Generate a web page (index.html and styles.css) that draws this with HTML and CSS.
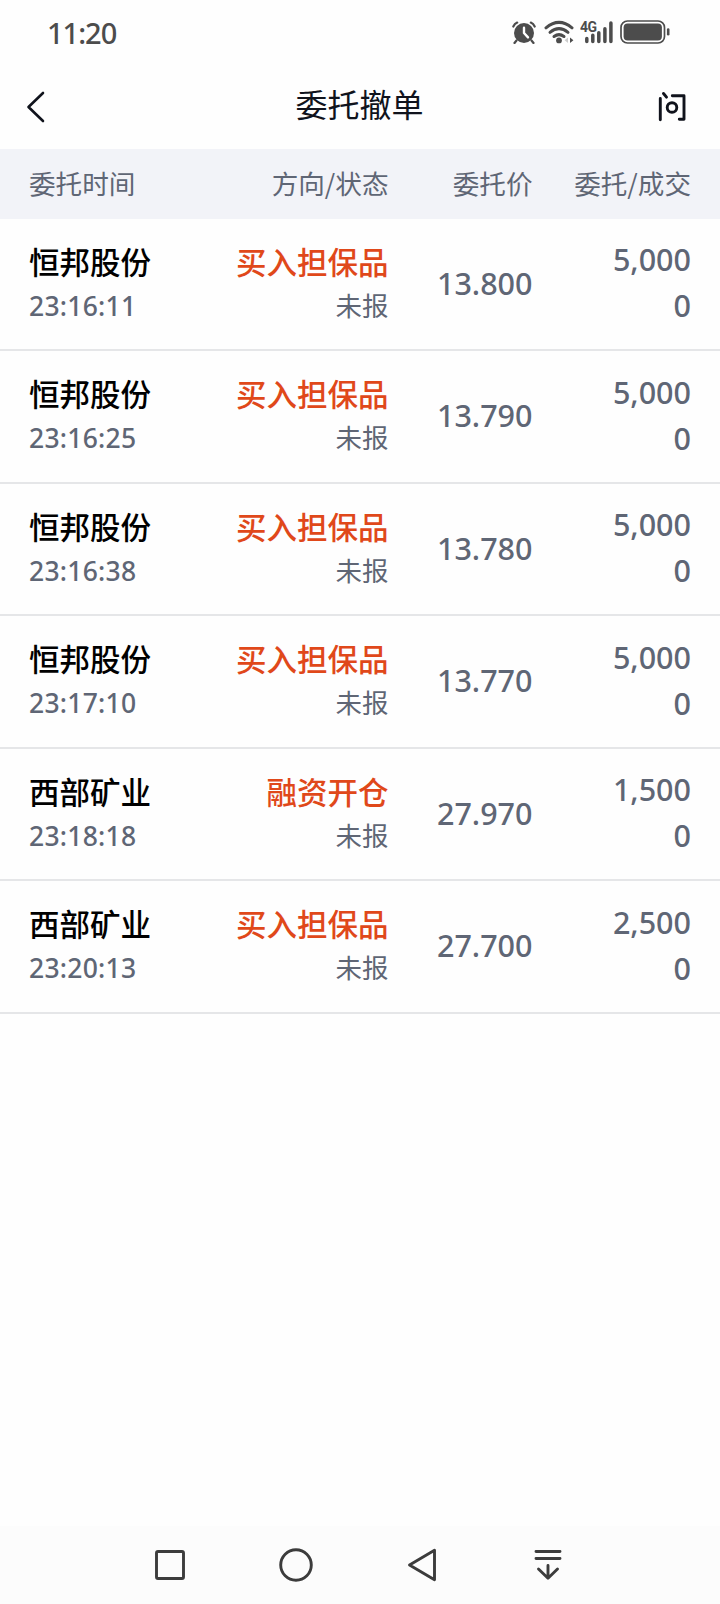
FILE: index.html
```html
<!DOCTYPE html>
<html lang="zh-CN">
<head>
    <meta charset="UTF-8">
    <meta name="viewport" content="width=device-width, initial-scale=1.0">
    <title>委托撤单</title>
    <link rel="stylesheet" href="styles.css">
</head>
<body>
    <div class="status-bar">
        <span class="clock">11:20</span>
        <div class="status-icons">
            <svg class="alarm" width="26" height="24" viewBox="0 0 26 24">
                <circle cx="13" cy="13" r="10" fill="#4c4c4c"/>
                <path d="M2.3 6.5 Q3.6 3.8 6.2 2.6M23.7 6.5 Q22.4 3.8 19.8 2.6M5.5 20.5 3.5 23M20.5 20.5 22.5 23" fill="none" stroke="#4c4c4c" stroke-width="2.2" stroke-linecap="round"/>
                <path d="M13 7.8V13L17 17.4" fill="none" stroke="#fff" stroke-width="2.4" stroke-linecap="round" stroke-linejoin="round"/>
            </svg>
            <svg class="wifi" width="30" height="24" viewBox="0 0 30 24">
                <g fill="none" stroke="#4c4c4c" stroke-width="3" stroke-linecap="round">
                    <path d="M2 7.8Q15-3 28 7.8"/>
                    <path d="M6 12.3Q15 5 24 12.3"/>
                    <path d="M10 16.5Q15 12.8 20 16.5"/>
                </g>
                <circle cx="15" cy="20.4" r="2.9" fill="#4c4c4c"/>
                <path d="M24 17.5V23L20.6 20.2Z" fill="#ccc"/>
                <path d="M26 17.5V23L29.4 20.2Z" fill="#4c4c4c"/>
            </svg>
            <svg class="signal" width="34" height="24" viewBox="0 0 34 24">
                <text x="0" y="11.7" class="net">4G</text>
                <path d="M6.8 18.5V21.5M12.8 15.2V21.5M18.8 12.8V21.5M24.9 8.7V21.5M30.9 3V21.5" stroke="#4c4c4c" stroke-width="3.5" stroke-linecap="round"/>
            </svg>
            <svg class="battery" width="50" height="24" viewBox="0 0 50 24">
                <rect x="1" y="1" width="43.5" height="22" rx="6.5" fill="none" stroke="#4c4c4c" stroke-width="1.7"/>
                <rect x="3.6" y="3.5" width="38.3" height="17" rx="4" fill="#4c4c4c"/>
                <path d="M48.2 9.5V14.3" stroke="#4c4c4c" stroke-width="2.6" stroke-linecap="round"/>
            </svg>
        </div>
    </div>

    <header class="title-bar">
        <svg width="28" height="32" viewBox="0 0 28 32">
            <path d="M17 2 2.5 16 17 30" fill="none" stroke="#10131c" stroke-width="2.6" stroke-linecap="round" stroke-linejoin="round"/>
        </svg>
        <h1>委托撤单</h1>
        <svg width="28" height="32" viewBox="0 0 28 32">
            <g fill="none" stroke="#10131c" stroke-width="2.9" stroke-linecap="round" stroke-linejoin="round">
                <path d="M2.3 7.5V28.8M5.5 2.5 8.5 6.2"/>
                <path d="M14.3 4.7H26V28.3H21.3"/>
                <circle cx="14" cy="16.5" r="4.8"/>
            </g>
        </svg>
    </header>

    <div class="row table-head">
        <span>委托时间</span>
        <span>方向/状态</span>
        <span>委托价</span>
        <span>委托/成交</span>
    </div>

    <main class="orders">
        <div class="row order">
            <div class="stock"><b>恒邦股份</b><span>23:16:11</span></div>
            <div class="side"><b>买入担保品</b><span>未报</span></div>
            <div class="price">13.800</div>
            <div class="qty"><span>5,000</span><span>0</span></div>
        </div>
        <div class="row order">
            <div class="stock"><b>恒邦股份</b><span>23:16:25</span></div>
            <div class="side"><b>买入担保品</b><span>未报</span></div>
            <div class="price">13.790</div>
            <div class="qty"><span>5,000</span><span>0</span></div>
        </div>
        <div class="row order">
            <div class="stock"><b>恒邦股份</b><span>23:16:38</span></div>
            <div class="side"><b>买入担保品</b><span>未报</span></div>
            <div class="price">13.780</div>
            <div class="qty"><span>5,000</span><span>0</span></div>
        </div>
        <div class="row order">
            <div class="stock"><b>恒邦股份</b><span>23:17:10</span></div>
            <div class="side"><b>买入担保品</b><span>未报</span></div>
            <div class="price">13.770</div>
            <div class="qty"><span>5,000</span><span>0</span></div>
        </div>
        <div class="row order">
            <div class="stock"><b>西部矿业</b><span>23:18:18</span></div>
            <div class="side"><b>融资开仓</b><span>未报</span></div>
            <div class="price">27.970</div>
            <div class="qty"><span>1,500</span><span>0</span></div>
        </div>
        <div class="row order">
            <div class="stock"><b>西部矿业</b><span>23:20:13</span></div>
            <div class="side"><b>买入担保品</b><span>未报</span></div>
            <div class="price">27.700</div>
            <div class="qty"><span>2,500</span><span>0</span></div>
        </div>
    </main>

    <nav class="nav-bar">
        <svg width="36" height="36" viewBox="0 0 36 36"><rect x="4.5" y="4.5" width="27" height="27" rx="1.5"/></svg>
        <svg width="36" height="36" viewBox="0 0 36 36"><circle cx="18" cy="18" r="15.3"/></svg>
        <svg width="36" height="36" viewBox="0 0 36 36"><path d="M30.5 3.3V32.7L5.5 18Z"/></svg>
        <svg width="36" height="36" viewBox="0 0 36 36"><path d="M6 4.5H30M6 11.5H30M18 18.5V31M8.5 22 18 31.3 27.5 22"/></svg>
    </nav>
</body>
</html>
```

FILE: styles.css
```css
* {
    box-sizing: border-box;
}
body {
    margin: 0;
    min-height: 1604px;
    display: flex;
    flex-direction: column;
    background: #fefefe;
    color: #5f6675;
    font-family: "Noto Sans", "Noto Sans CJK SC", sans-serif;
}
svg {
    display: block;
}
.status-bar {
    height: 64px;
    padding: 0 50px 0 47px;
    display: flex;
    align-items: center;
    justify-content: space-between;
    color: #4c4c4c;
}
.clock {
    padding-top: 2px;
    font-size: 29px;
    font-weight: 500;
    letter-spacing: -1px;
    line-height: 62px;
}
.status-icons {
    display: flex;
}
.wifi {
    margin-left: 7px;
}
.signal {
    margin-left: 6px;
}
.battery {
    margin-left: 6px;
}
.net {
    font-family: Roboto, sans-serif;
    font-size: 14px;
    font-weight: 700;
    letter-spacing: -0.5px;
    fill: #4c4c4c;
}
.title-bar {
    height: 85px;
    padding: 0 34px 0 26px;
    display: flex;
    align-items: center;
    justify-content: space-between;
}
.title-bar svg {
    margin-top: 1px;
}
.title-bar h1 {
    margin: 0 0 7px;
    padding-left: 7px;
    font-family: "Noto Sans CJK SC", sans-serif;
    font-size: 32px;
    font-weight: 400;
    color: #10131c;
    line-height: 48px;
}
.row {
    display: grid;
    grid-template-columns: 160px 199.5px 144px 158.5px;
    padding: 0 29px;
    text-align: right;
}
.row > :first-child {
    text-align: left;
}
.table-head {
    height: 69.7px;
    line-height: 67px;
    background: #f2f3f8;
    font-family: "Noto Sans CJK SC", sans-serif;
    font-size: 26.6px;
}
.order {
    height: 132.5px;
    border-bottom: 2px solid #e5e6e8;
}
.stock,
.side {
    padding-top: 20px;
}
.order b,
.order span {
    display: block;
    height: 44px;
    line-height: 44px;
}
.order b {
    font-family: "Noto Sans CJK SC", sans-serif;
    font-size: 30.5px;
    font-weight: 500;
}
.stock b {
    color: #000;
}
.stock span {
    padding-top: 1px;
    font-size: 26.5px;
    font-weight: 500;
    letter-spacing: 0.25px;
}
.side b {
    color: #e0481a;
}
.side span {
    font-family: "Noto Sans CJK SC", sans-serif;
    font-size: 26.5px;
}
.price,
.qty {
    font-size: 30.5px;
    font-weight: 500;
}
.price {
    line-height: 128px;
}
.qty {
    padding-top: 17.5px;
}
.qty span {
    height: 46px;
    line-height: 46px;
}
.nav-bar {
    height: 78px;
    margin-top: auto;
    padding: 0 154px 0 152px;
    display: flex;
    align-items: center;
    justify-content: space-between;
    background: #fcfcfc;
}
.nav-bar svg {
    fill: none;
    stroke: #3c3c3c;
    stroke-width: 2.9;
    stroke-linecap: round;
    stroke-linejoin: round;
}
```
